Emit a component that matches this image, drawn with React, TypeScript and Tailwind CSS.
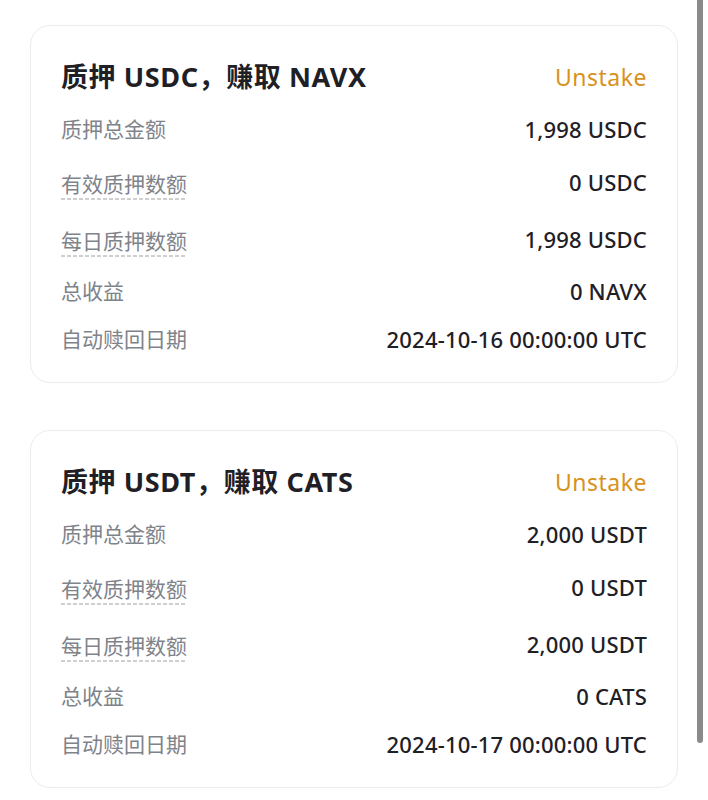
import React from "react";

type Row = { label: string; value: string; dashed?: boolean };
type Card = { title: string; rows: Row[] };

const cards: Card[] = [
  {
    title: "质押 USDC，赚取 NAVX",
    rows: [
      { label: "质押总金额", value: "1,998 USDC" },
      { label: "有效质押数额", value: "0 USDC", dashed: true },
      { label: "每日质押数额", value: "1,998 USDC", dashed: true },
      { label: "总收益", value: "0 NAVX" },
      { label: "自动赎回日期", value: "2024-10-16 00:00:00 UTC" },
    ],
  },
  {
    title: "质押 USDT，赚取 CATS",
    rows: [
      { label: "质押总金额", value: "2,000 USDT" },
      { label: "有效质押数额", value: "0 USDT", dashed: true },
      { label: "每日质押数额", value: "2,000 USDT", dashed: true },
      { label: "总收益", value: "0 CATS" },
      { label: "自动赎回日期", value: "2024-10-17 00:00:00 UTC" },
    ],
  },
];

const font = {
  fontFamily: '"Noto Sans", "Noto Sans CJK SC", sans-serif',
};

export default function App() {
  return (
    <div className="relative w-[708px] h-[800px] bg-white overflow-hidden" style={font}>
      <div className="flex flex-col gap-[47px] pt-[25px] px-[30px]">
        {cards.map((c, i) => (
          <div
            key={i}
            className="h-[358px] rounded-[20px] border border-[#ececec] px-[30px] pt-[35px]"
          >
            <div className="flex items-center justify-between h-[32px]">
              <div className="text-[27px] leading-[32px] font-bold text-[#1e2026] tracking-[0.6px]">
                {c.title}
              </div>
              <div className="text-[23px] leading-[32px] text-[#d8921c] tracking-[0.5px]">Unstake</div>
            </div>
            <div className="mt-[22px] flex flex-col gap-[20px]">
              {c.rows.map((r, j) => (
                <div
                  key={j}
                  className={`flex items-start justify-between ${r.dashed ? "pt-[5px]" : ""}`}
                >
                  {r.dashed ? (
                    <div className="mt-[2px] text-[21px] leading-[28px] text-[#7f838a] pb-[2px] bg-[linear-gradient(to_right,#cfcfcf_60%,transparent_0)] bg-[length:6px_2px] bg-repeat-x bg-bottom">
                      {r.label}
                    </div>
                  ) : (
                    <div className="text-[21px] leading-[28px] text-[#7f838a]">{r.label}</div>
                  )}
                  <div className="text-[22px] leading-[28px] font-medium text-[#1e2026] tracking-[0.2px]">
                    {r.value}
                  </div>
                </div>
              ))}
            </div>
          </div>
        ))}
      </div>
      <div className="absolute left-[697px] top-0 w-[6px] h-[743px] rounded-b-full bg-[#8a8a8a]" />
    </div>
  );
}
